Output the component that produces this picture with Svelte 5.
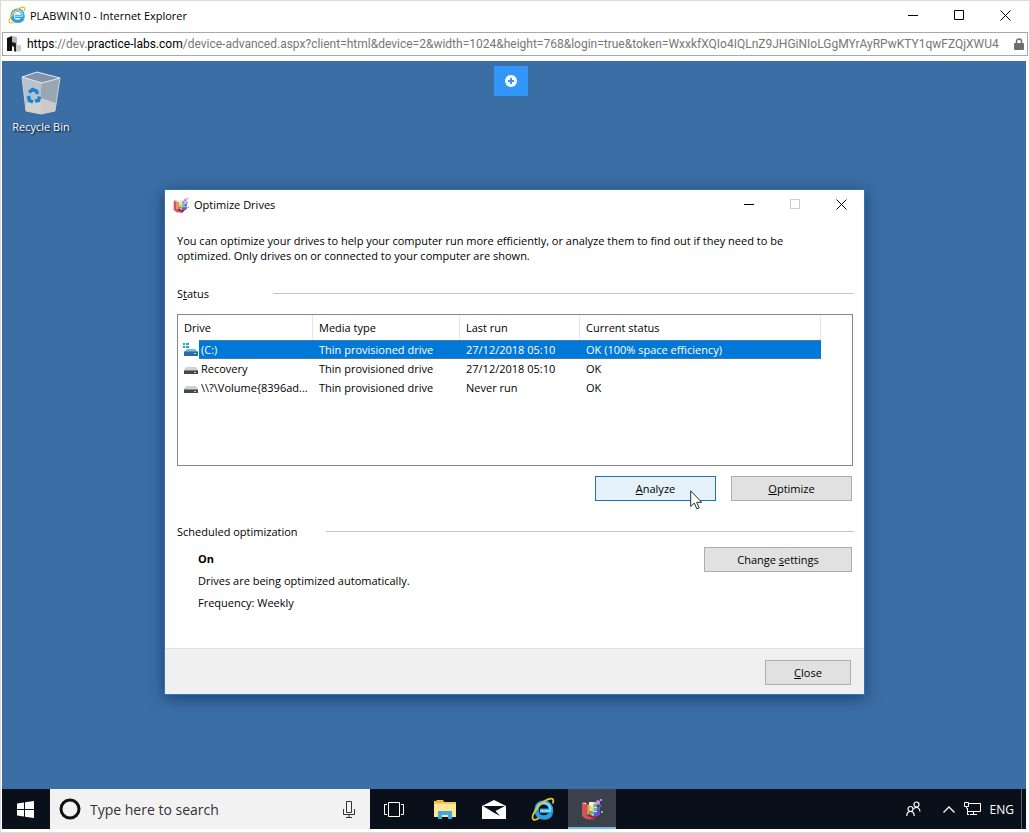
<script lang="ts">
	const url = {
		scheme: 'https',
		sub: '://dev.',
		domain: 'practice-labs.com',
		rest: '/device-advanced.aspx?client=html&device=2&width=1024&height=768&login=true&token=WxxkfXQIo4IQLnZ9JHGiNIoLGgMYrAyRPwKTY1qwFZQjXWU4'
	};

	const drives = [
		{
			name: '(C:)',
			media: 'Thin provisioned drive',
			lastRun: '27/12/2018 05:10',
			status: 'OK (100% space efficiency)',
			system: true
		},
		{
			name: 'Recovery',
			media: 'Thin provisioned drive',
			lastRun: '27/12/2018 05:10',
			status: 'OK',
			system: false
		},
		{
			name: '\\\\?\\Volume{8396ad...',
			media: 'Thin provisioned drive',
			lastRun: 'Never run',
			status: 'OK',
			system: false
		}
	];

	let selected = $state(0);
</script>

{#snippet ieIcon(size: number)}
	<svg width={size} height={size} viewBox="0 0 24 24" aria-hidden="true">
		<path
			d="M20 16C18.700 19 16 20.500 12.800 20.500 8.300 20.500 5.500 17.500 5.500 13S8.500 5.500 12.800 5.500 20 8.500 20 13.800H9"
			fill="none"
			stroke="#2b9fe0"
			stroke-width="4.500"
		/>
		<path
			d="M5.500 12.500C6 8.700 8.800 6 12.800 6S19 8.500 19.700 12.500M9 13.800h11"
			fill="none"
			stroke="#8fdcf8"
			stroke-width="2"
		/>
		<path
			d="M21.800 6.500C22.800 3.600 22.300 1.800 20.500 1.700 16.500 1.500 9 6.500 5 12.500 2 17 .8 21.200 2.500 22.400 3.600 23.200 5.600 22.600 8 21"
			fill="none"
			stroke="#e9c32c"
			stroke-width="1.800"
		/>
	</svg>
{/snippet}

{#snippet defragIcon(size: number)}
	<svg width={size} height={size} viewBox="0 0 22 22" aria-hidden="true">
		<path d="M1 5l4 1v11l8 1v3.500L5 21l-4-3z" fill="#d4525c" />
		<path d="M1 5l2-.8 3 1L5 7z" fill="#f4a1a0" />
		<path d="M5 17l4-2 9 1-5 5.500z" fill="#a5284a" />
		<path d="M5.500 7L9 6v10l-3.500 1z" fill="#e98a58" />
		<path d="M9 4h4l3 1v11l-4 2-3-2z" fill="#e4d9df" />
		<path d="M8 4h4v4H8z" fill="#f3eee0" />
		<path d="M8 9h4v3H8z" fill="#f2dc3c" />
		<path d="M8 13h4v3H8z" fill="#59b94a" />
		<path d="M12.500 6H16v3h-3.500z" fill="#55c25a" />
		<path d="M12.500 10H16v3h-3.500z" fill="#4cb7dc" />
		<path d="M12.500 14H16v4h-3.500z" fill="#3d6fd0" />
		<path d="M16 9h3v3.500h-3z" fill="#5960cf" />
		<path d="M16 13h3v4l-3 1z" fill="#8c3fb4" />
		<path d="M15 3l2-1 2 1v3l-2 1-2-1z" fill="#c98be6" />
		<path d="M18 7l2-.5.5 2-2 .5z" fill="#a74fce" />
		<path d="M19 1h2v2h-2zM20 13h2v2h-2z" fill="#8aa5ee" />
	</svg>
{/snippet}

{#snippet driveIcon(system: boolean)}
	<svg class="drive-icon" width="16" height="16" viewBox="0 0 16 16" aria-hidden="true">
		{#if system}
			<path d="M0 1h2v2H0zM3 1h3v2H3zM0 4h2v2H0zM3 4h3v2H3z" fill="#19a5d8" />
			<path d="M4 7h8l3 3H1z" fill="#7db7df" />
			<path d="M1 9.500h14V14H1z" fill="#2a6ba6" />
		{:else}
			<path d="M3 6h10l2 3H1z" fill="#d0d1d1" />
			<path d="M1 9h14v4H1z" fill="#444849" />
			<path d="M1 9h14v1H1z" fill="#858888" />
		{/if}
		<path d="M11 11h2v1h-2z" fill="#8df3a4" />
	</svg>
{/snippet}

<div class="browser">
	<header class="titlebar">
		{@render ieIcon(18)}
		<h1 class="title">PLABWIN10 - Internet Explorer</h1>
		<div class="window-controls">
			<button aria-label="Minimize">
				<svg width="11" height="11" viewBox="0 0 11 11"><path d="M0 5.500h10" /></svg>
			</button>
			<button aria-label="Maximize">
				<svg width="11" height="11" viewBox="0 0 11 11"><path d="M.5.5h9v9h-9z" /></svg>
			</button>
			<button aria-label="Close window">
				<svg width="11" height="11" viewBox="0 0 11 11"><path d="M.5.5l10 10M10.500.5l-10 10" /></svg>
			</button>
		</div>
	</header>

	<div class="address-bar">
		<svg width="15" height="16" viewBox="0 0 15 16" aria-hidden="true">
			<path d="M0 2l5-2v15H0z" fill="#111" />
			<path d="M5 0l5 1v8H5z" fill="#bbb" />
			<path d="M5 6l4 1v9l-2-1v-4l-2-1z" fill="#222" />
			<path d="M9 9h5v6l-5 1z" fill="#ccc" />
		</svg>
		<div class="url">
			<b>{url.scheme}</b>{url.sub}<b>{url.domain}</b>{url.rest}
		</div>
		<svg class="lock" width="10" height="13" viewBox="0 0 10 13" aria-hidden="true">
			<path d="M2.500 6V3.500a2.500 2.500 0 0 1 5 0V6" fill="none" stroke="#6e6e6e" stroke-width="1.500" />
			<rect x="0" y="5" width="10" height="7" rx="1" fill="#6e6e6e" />
		</svg>
	</div>

	<main class="desktop">
		<button class="shortcut">
			<svg width="40" height="44" viewBox="0 0 40 44" aria-hidden="true">
				<path d="M1 6l20 6-1 31L5 40z" fill="#b9c2cb" />
				<path d="M21 12l18-5-5 33-14 3z" fill="#9aa6b3" />
				<path d="M4 33l16-6 15 5-1 8-14 3-15-3z" fill="#d9d5cf" opacity=".75" />
				<path d="M1 6L16 1l23 6-18 5z" fill="#8093a8" stroke="#e6edf3" stroke-width="1" />
				<path d="M1 6l4 34 15 3 14-3 5-33" fill="none" stroke="#c8d2dc" stroke-width="1" />
				<path
					d="M8 21.500l3.500-3 4 1.500 1 3M7.500 25l1 4.500 3.500 1.500M14 30l3.500-.5 1-4"
					fill="none"
					stroke="#1583d8"
					stroke-width="3.500"
				/>
			</svg>
			<span>Recycle Bin</span>
		</button>

		<button class="toolbar-toggle" aria-label="Show toolbar">
			<svg width="14" height="14" viewBox="0 0 14 14">
				<circle cx="7" cy="7" r="6" fill="#fff" />
				<path d="M7 4v6M4 7h6" stroke="#3296fa" stroke-width="2" />
			</svg>
		</button>

		<section class="dialog" aria-labelledby="dialog-title">
			<header class="dialog-titlebar">
				{@render defragIcon(16)}
				<h2 id="dialog-title">Optimize Drives</h2>
				<div class="window-controls">
					<button aria-label="Minimize dialog">
						<svg width="11" height="11" viewBox="0 0 11 11"><path d="M0 5.500h10" /></svg>
					</button>
					<button aria-label="Maximize dialog" disabled>
						<svg width="11" height="11" viewBox="0 0 11 11"><path d="M.5.5h9v9h-9z" /></svg>
					</button>
					<button aria-label="Close dialog">
						<svg width="11" height="11" viewBox="0 0 11 11"><path d="M.5.5l10 10M10.500.5l-10 10" /></svg>
					</button>
				</div>
			</header>

			<div class="dialog-body">
				<p class="intro">
					You can optimize your drives to help your computer run more efficiently, or analyze them to
					find out if they need to be optimized. Only drives on or connected to your computer are
					shown.
				</p>

				<h3 class="group-title status-title"><span>S<u>t</u>atus</span></h3>

				<div class="drive-list">
					<table>
						<colgroup>
							<col class="col-drive" />
							<col class="col-media" />
							<col class="col-run" />
							<col class="col-status" />
						</colgroup>
						<thead>
							<tr>
								<th>Drive</th>
								<th>Media type</th>
								<th>Last run</th>
								<th>Current status</th>
							</tr>
						</thead>
						<tbody>
							{#each drives as drive, i (drive.name)}
								<tr class:selected={i === selected} onclick={() => (selected = i)}>
									<td>
										<div class="drive-cell">
											{@render driveIcon(drive.system)}
											<span class="drive-name">{drive.name}</span>
										</div>
									</td>
									<td>{drive.media}</td>
									<td>{drive.lastRun}</td>
									<td>{drive.status}</td>
								</tr>
							{/each}
						</tbody>
					</table>
				</div>

				<div class="actions">
					<button class="btn btn-wide hot"><u>A</u>nalyze</button>
					<button class="btn btn-wide"><u>O</u>ptimize</button>
				</div>

				<h3 class="group-title schedule-title"><span>Scheduled optimization</span></h3>

				<div class="schedule">
					<div class="schedule-info">
						<strong>On</strong>
						<p>Drives are being optimized automatically.</p>
						<p>Frequency: Weekly</p>
					</div>
					<button class="btn btn-settings">Change <u>s</u>ettings</button>
				</div>
			</div>

			<footer class="dialog-footer">
				<button class="btn btn-close"><u>C</u>lose</button>
			</footer>
		</section>

		<svg class="cursor" width="13" height="20" viewBox="0 0 13 20" aria-hidden="true">
			<path
				d="M.7.8v15.700l3.600-3.400 2.500 5.700 2.400-1-2.500-5.500h5z"
				fill="#fff"
				stroke="#222a36"
				stroke-width="1"
			/>
		</svg>
	</main>

	<nav class="taskbar">
		<button class="start" aria-label="Start">
			<svg width="17" height="17" viewBox="0 0 17 17">
				<path d="M0 2.500L7 1.500V8H0zM8 1.300L17 0v8H8zM0 9h7v6.500l-7-1zM8 9h9v8l-9-1.300z" fill="#fff" />
			</svg>
		</button>
		<label class="search">
			<svg width="22" height="22" viewBox="0 0 22 22" aria-hidden="true">
				<circle cx="11" cy="11" r="9" fill="none" stroke="#111" stroke-width="3" />
			</svg>
			<input type="text" placeholder="Type here to search" aria-label="Search" />
			<svg width="12" height="17" viewBox="0 0 12 17" aria-hidden="true">
				<path
					d="M3.500.5h5v11h-5zM.5 8v5.500h11V8M6 13.500v3M3 16.500h6"
					fill="none"
					stroke="#333"
				/>
			</svg>
		</label>
		<button class="task-view" aria-label="Task view">
			<svg width="20" height="15" viewBox="0 0 20 15">
				<path d="M4.500.5h11v14h-11zM3 2.500H.5v10H3M17 2.500h2.500v10H17" fill="none" stroke="#fff" />
			</svg>
		</button>
		<button class="app" aria-label="File Explorer">
			<svg width="22" height="19" viewBox="0 0 22 19">
				<path d="M0 1h2l1-1h6l1 2h12v15H0z" fill="#f5c951" />
				<path d="M0 4h22v13H0z" fill="#fde698" />
				<path d="M2 1h7v1H2z" fill="#e79b31" />
				<path d="M4 11h14v8h-4v-4H8v4H4z" fill="#3fa9dc" />
			</svg>
		</button>
		<button class="app" aria-label="Mail">
			<svg width="24" height="19" viewBox="0 0 24 19">
				<path d="M0 6L12 0l12 6v13H0z" fill="#fff" />
				<path d="M1 6h22L13.500 11l4.500 5-6.500-3.500z" fill="#0a1019" />
			</svg>
		</button>
		<button class="app" aria-label="Internet Explorer">{@render ieIcon(24)}</button>
		<button class="app active" aria-label="Optimize Drives">{@render defragIcon(22)}</button>

		<div class="tray">
			<button class="people" aria-label="People">
				<svg width="15" height="16" viewBox="0 0 15 16" fill="none" stroke="#fff" stroke-width="1.200">
					<circle cx="10.500" cy="3.500" r="2.500" />
					<circle cx="4.500" cy="8" r="2.500" />
					<path d="M.8 15c0-6 7.400-6 7.400 0M7.500 7.800c3-2.800 6.500-1 6.500 2.700" />
				</svg>
			</button>
			<button aria-label="Show hidden icons">
				<svg width="12" height="7" viewBox="0 0 12 7">
					<path d="M.5 6.500L6 1l5.500 5.500" fill="none" stroke="#fff" stroke-width="1.300" />
				</svg>
			</button>
			<button aria-label="Network">
				<svg width="17" height="14" viewBox="0 0 17 14" fill="none" stroke="#fff">
					<path d="M5 1.500h11.500v8H3.500V6M9.500 9.500v3M6 12.500h7M3.500 9.500v3M3 12.500h2" />
					<path d="M.5.500h4v4h-4zM2.500 5v1.500" />
				</svg>
			</button>
			<button class="lang">ENG</button>
		</div>
		<button class="show-desktop" aria-label="Show desktop"></button>
	</nav>
</div>

<style>
	:global(body) {
		margin: 0;
		background: #fff;
	}

	.browser {
		display: flex;
		flex-direction: column;
		box-sizing: border-box;
		min-height: 100vh;
		padding: 0 1px 3px;
		border: 1px solid #dcdcdc;
		font-family: 'Open Sans', 'Noto Sans', sans-serif;
		font-size: 12px;
		color: #000;
		background: #fff;
	}

	button {
		padding: 0;
		border: 0;
		background: none;
		font: inherit;
		color: inherit;
	}

	svg {
		display: block;
		flex: none;
	}

	h1,
	h2,
	h3,
	p {
		margin: 0;
		font-size: inherit;
		font-weight: 400;
	}

	.titlebar {
		display: flex;
		align-items: center;
		gap: 4px;
		height: 28px;
		padding-left: 6px;
	}

	.title {
		font-size: 11px;
	}

	.window-controls {
		display: flex;
		align-self: stretch;
		margin-left: auto;
	}

	.window-controls button {
		display: grid;
		place-items: center;
		width: 46px;
	}

	.window-controls path {
		fill: none;
		stroke: #000;
	}

	.window-controls button:disabled path {
		stroke: #ccc;
	}

	.address-bar {
		display: flex;
		align-items: center;
		gap: 5px;
		height: 22px;
		margin-top: 3px;
		padding: 0 3px 0 4px;
		border: 1px solid #a9a9a9;
	}

	.url {
		flex: 1;
		min-width: 0;
		overflow: hidden;
		white-space: nowrap;
		font-family: Roboto, 'Open Sans', sans-serif;
		color: #777;
	}

	.url b {
		font-weight: 400;
		color: #000;
	}

	.desktop {
		position: relative;
		flex: 1;
		min-height: 660px;
		margin: 5px 2px 0 0;
		background: #3a6ea5;
	}

	.shortcut {
		position: absolute;
		top: 10px;
		left: 2px;
		display: flex;
		flex-direction: column;
		align-items: center;
		gap: 4px;
		width: 74px;
		font-size: 11px;
		line-height: 16px;
		color: #fff;
		text-shadow: 1px 1px 2px #000;
	}

	.toolbar-toggle {
		position: absolute;
		top: 5px;
		left: calc(50% - 20px);
		display: grid;
		place-items: center;
		width: 34px;
		height: 30px;
		background: #3296fa;
	}

	.cursor {
		position: absolute;
		top: 429px;
		left: 688px;
	}

	.dialog {
		position: absolute;
		top: 128px;
		left: 162px;
		width: 699px;
		border: 1px solid #2a78b5;
		background: #fff;
		box-shadow: 0 3px 14px rgba(0, 20, 60, 0.5);
		font-size: 11px;
		line-height: 15px;
	}

	.dialog-titlebar {
		display: flex;
		align-items: center;
		gap: 5px;
		height: 29px;
		padding-left: 8px;
	}

	.dialog-body {
		padding: 14px 11px 0 12px;
	}

	.intro {
		max-width: 650px;
	}

	.group-title {
		display: flex;
		align-items: center;
	}

	.group-title::after {
		content: '';
		flex: 1;
		height: 1px;
		margin-right: -1px;
		background: #c4c4c4;
	}

	.status-title {
		margin-top: 23px;
	}

	.status-title span {
		width: 96px;
	}

	.drive-list {
		height: 150px;
		margin-top: 13px;
		border: 1px solid #828790;
		overflow: hidden;
	}

	table {
		width: 643px;
		border-collapse: collapse;
		table-layout: fixed;
	}

	.col-drive {
		width: 135px;
	}

	.col-media {
		width: 147px;
	}

	.col-run {
		width: 120px;
	}

	.col-status {
		width: 241px;
	}

	th {
		height: 25px;
		padding: 0 6px;
		font-weight: 400;
		text-align: left;
		background: linear-gradient(#e5e5e5, #e5e5e5) right / 1px 100% no-repeat;
	}

	td {
		height: 19px;
		padding: 0 6px;
		white-space: nowrap;
	}

	td:first-child {
		padding: 0;
	}

	.drive-cell {
		display: flex;
		align-items: center;
		height: 19px;
		padding-left: 5px;
	}

	.drive-name {
		flex: 1;
		min-width: 0;
		padding-left: 2px;
		line-height: 19px;
	}

	.selected td:not(:first-child),
	.selected .drive-name {
		color: #fff;
		background: #0078d7;
		box-shadow:
			inset 0 1px #4a7ca3,
			inset 0 -1px #4a7ca3;
	}

	.actions {
		display: flex;
		justify-content: flex-end;
		gap: 15px;
		margin: 10px 1px 0 0;
	}

	.btn {
		box-sizing: border-box;
		height: 25px;
		border: 1px solid #adadad;
		background: #e1e1e1;
	}

	.btn-wide {
		width: 121px;
	}

	.btn.hot {
		border-color: #1f74b4;
		background: #e5f1fb;
	}

	.schedule-title {
		margin-top: 23px;
	}

	.schedule-title span {
		width: 149px;
	}

	.schedule {
		display: flex;
		justify-content: space-between;
		align-items: flex-start;
		height: 101px;
		margin: 8px 1px 0 21px;
	}

	.schedule-info {
		display: flex;
		flex-direction: column;
		gap: 7px;
		padding-top: 4px;
	}

	.btn-settings {
		width: 148px;
	}

	.dialog-footer {
		display: flex;
		justify-content: flex-end;
		padding: 11px 13px 9px;
		border-top: 1px solid #dfdfdf;
		background: #f0f0f0;
	}

	.btn-close {
		width: 86px;
	}

	.taskbar {
		display: flex;
		gap: 1px;
		height: 40px;
		margin-right: 2px;
		color: #fff;
		background: #0a1019;
	}

	.taskbar button {
		display: grid;
		place-items: center;
	}

	.taskbar .start {
		width: 47px;
	}

	.search {
		display: flex;
		align-items: center;
		gap: 9px;
		box-sizing: border-box;
		width: 320px;
		padding: 0 15px 0 9px;
		background: #f2f2f2;
	}

	.search input {
		flex: 1;
		min-width: 0;
		padding: 0;
		border: 0;
		outline: 0;
		background: none;
		font: inherit;
		font-size: 14px;
	}

	.search input::placeholder {
		color: #333;
		opacity: 1;
	}

	.taskbar .task-view {
		width: 46px;
		margin-right: 3px;
	}

	.taskbar .app {
		width: 48px;
	}

	.taskbar .active {
		box-sizing: border-box;
		padding-top: 2px;
		border-bottom: 2px solid #76b9ed;
		background: #3a414b;
	}

	.tray {
		display: flex;
		align-items: center;
		gap: 9px;
		margin-left: auto;
		padding-right: 6px;
	}

	.tray .people {
		margin-right: 13px;
	}

	.show-desktop {
		width: 5px;
		border-left: 1px solid #5a6069;
	}
</style>
